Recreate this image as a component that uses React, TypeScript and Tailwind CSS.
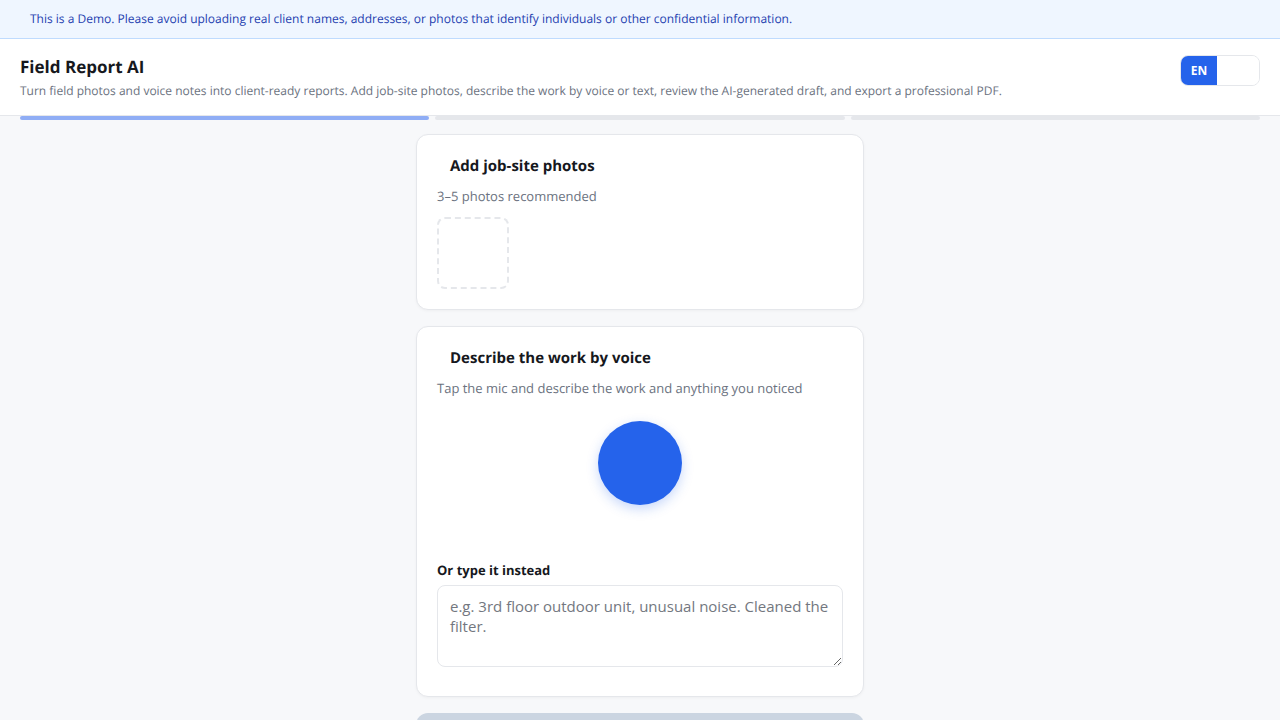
import { useState } from "react";

const STEPS = ["photos", "review", "export"];

function Progress({ current }: { current: number }) {
  return (
    <div className="flex gap-1.5 px-5">
      {STEPS.map((step, i) => (
        <div
          key={step}
          className={`h-1 flex-1 rounded-sm ${i <= current ? "bg-[#8fadf5]" : "bg-[#e5e7eb]"}`}
        />
      ))}
    </div>
  );
}

function Card({ title, hint, children }: { title: string; hint: string; children: React.ReactNode }) {
  return (
    <section className="rounded-xl border border-[#e5e7eb] bg-white p-5 shadow-[0_1px_3px_rgba(0,0,0,0.04)]">
      <h2 className="pl-[13px] text-[15px] leading-[22px] font-bold">{title}</h2>
      <p className="mt-[9px] mb-[11px] text-[13px] leading-5 text-[#6b7280]">{hint}</p>
      {children}
    </section>
  );
}

export default function App() {
  const [lang, setLang] = useState("en");
  const [notes, setNotes] = useState("");

  return (
    <div className="min-h-screen bg-[#f7f8fa] font-['Open_Sans',sans-serif] text-[#16181d] [text-rendering:geometricPrecision]">
      {/* Demo notice */}
      <div className="border-b border-[#bfdbfe] bg-[#eff6ff] px-[30px] py-2.5 text-xs leading-[18px] text-[#1e40af]">
        This is a Demo. Please avoid uploading real client names, addresses, or photos that identify individuals or other confidential information.
      </div>

      <header className="flex items-start justify-between gap-4 border-b border-[#e5e7eb] bg-white px-5 pt-4 pb-[15px]">
        <div>
          <h1 className="text-[17px] leading-6 font-bold">Field Report AI</h1>
          <p className="mt-[3px] text-xs leading-[18px] text-[#6b7280]">
            Turn field photos and voice notes into client-ready reports. Add job-site photos, describe the work by voice or text, review the AI-generated draft, and export a professional PDF.
          </p>
        </div>
        <div className="flex h-[31px] w-20 shrink-0 overflow-hidden rounded-lg border border-[#e5e7eb]">
          <button
            type="button"
            onClick={() => setLang("en")}
            className={`w-9 text-xs font-bold ${lang === "en" ? "bg-[#2563eb] text-white" : "bg-white text-[#6b7280]"}`}
          >
            EN
          </button>
          <button
            type="button"
            aria-label="Other language"
            onClick={() => setLang("other")}
            className={`flex-1 ${lang === "other" ? "bg-[#2563eb]" : "bg-white"}`}
          />
        </div>
      </header>

      <Progress current={0} />

      <main className="mx-auto flex w-full max-w-md flex-col gap-4 pt-3.5 pb-6">
        <Card title="Add job-site photos" hint="3–5 photos recommended">
          <button
            type="button"
            aria-label="Add photo"
            className="block size-[72px] rounded-lg border-2 border-dashed border-[#e5e7eb]"
          />
        </Card>

        <Card title="Describe the work by voice" hint="Tap the mic and describe the work and anything you noticed">
          <button
            type="button"
            aria-label="Record"
            className="mx-auto mt-[23px] block size-[84px] rounded-full bg-[#2563eb] shadow-[0_4px_12px_rgba(37,99,235,0.25)]"
          />
          <label htmlFor="notes" className="mt-[55px] block text-[13px] leading-5 font-bold">
            Or type it instead
          </label>
          <textarea
            id="notes"
            rows={3}
            value={notes}
            onChange={(e) => setNotes(e.target.value)}
            placeholder="e.g. 3rd floor outdoor unit, unusual noise. Cleaned the filter."
            className="mt-[5px] mb-[9px] block w-full resize-y rounded-lg border border-[#e5e7eb] bg-white px-3 py-2.5 text-[15px] leading-5 placeholder:text-[#737780]"
          />
        </Card>

        <button type="button" aria-label="Generate report" disabled className="h-[50px] rounded-xl bg-[#cbd5e1]" />
      </main>
    </div>
  );
}
